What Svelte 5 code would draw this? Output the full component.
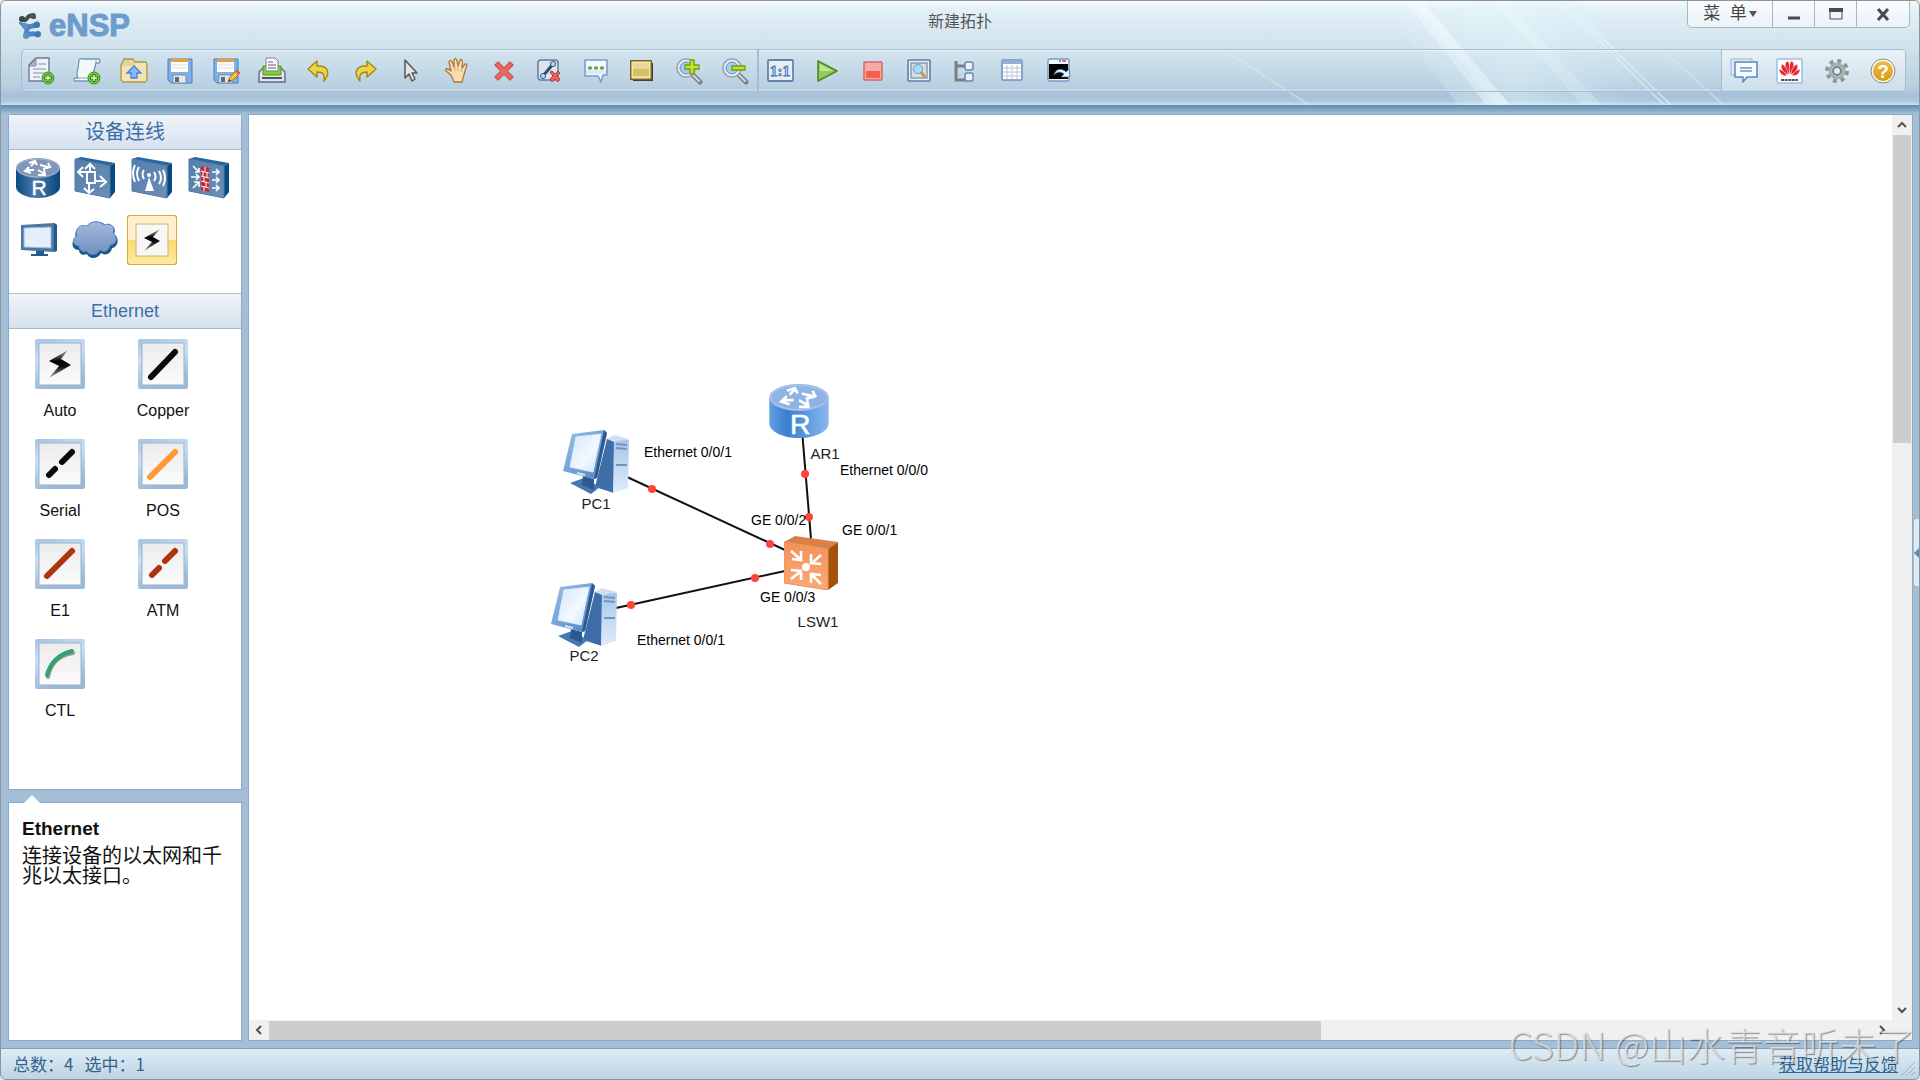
<script lang="ts">
  interface Device {
    id: string;
    kind: 'pc' | 'router' | 'switch';
    x: number;
    y: number;
    labelX: number;
    labelY: number;
  }

  // ── Toolbar ────────────────────────────────────────────────
  const editTools = [
    { icon: 'new', label: '新建拓扑' },
    { icon: 'paper', label: '新建试卷工程' },
    { icon: 'open', label: '打开' },
    { icon: 'save', label: '保存' },
    { icon: 'saveas', label: '另存为' },
    { icon: 'print', label: '打印' },
    { icon: 'undo', label: '撤销' },
    { icon: 'redo', label: '恢复' },
    { icon: 'cursor', label: '选择' },
    { icon: 'hand', label: '拖动' },
    { icon: 'delete', label: '删除' },
    { icon: 'unlink', label: '删除连线' },
    { icon: 'note', label: '文本' },
    { icon: 'palette', label: '调色板' },
    { icon: 'zoomin', label: '放大' },
    { icon: 'zoomout', label: '缩小' }
  ];
  const runTools = [
    { icon: 'reset', label: '重置大小' },
    { icon: 'start', label: '开启设备' },
    { icon: 'stop', label: '停止设备' },
    { icon: 'capture', label: '数据抓包' },
    { icon: 'tree', label: '显示所有接口' },
    { icon: 'grid', label: '显示网格' },
    { icon: 'console', label: '打开命令行' }
  ];
  const helpTools = [
    { icon: 'forum', label: '论坛' },
    { icon: 'huawei', label: '官网' },
    { icon: 'settings', label: '选项' },
    { icon: 'help', label: '帮助' }
  ];

  // ── Sidebar ────────────────────────────────────────────────
  const categories = ['router', 'switch', 'wlan', 'firewall', 'terminal', 'cloud', 'link'];
  const cables = ['Auto', 'Copper', 'Serial', 'POS', 'E1', 'ATM', 'CTL'];
  let category = $state('link');

  // ── Topology ───────────────────────────────────────────────
  const devices: Device[] = [
    { id: 'PC1', kind: 'pc', x: 314, y: 315, labelX: 347, labelY: 389 },
    { id: 'PC2', kind: 'pc', x: 302, y: 468, labelX: 335, labelY: 541 },
    { id: 'AR1', kind: 'router', x: 520, y: 269, labelX: 576, labelY: 339 },
    { id: 'LSW1', kind: 'switch', x: 535, y: 421, labelX: 569, labelY: 507 }
  ];
  const links = [
    { from: [553, 315], to: [562, 424], dots: [[556, 359], [560, 402]] },
    { from: [378, 362], to: [536, 435], dots: [[403, 374], [521, 429]] },
    { from: [367, 493], to: [536, 456], dots: [[382, 490], [506, 463]] }
  ];
  const ports = [
    { text: 'Ethernet 0/0/1', x: 395, y: 337 },
    { text: 'Ethernet 0/0/0', x: 591, y: 355 },
    { text: 'GE 0/0/2', x: 502, y: 405 },
    { text: 'GE 0/0/1', x: 593, y: 415 },
    { text: 'GE 0/0/3', x: 511, y: 482 },
    { text: 'Ethernet 0/0/1', x: 388, y: 525 }
  ];
</script>

{#snippet routerBody(dark: boolean)}
  <path d="M0 10V29C0 35 10 40 22 40S44 35 44 29V10Z" fill={dark ? 'url(#navySide)' : 'url(#blueSide)'} />
  <ellipse cx="22" cy="10" rx="22" ry="10" fill={dark ? '#8095b8' : '#8fb3e2'} />
  <ellipse cx="22" cy="10" rx="21" ry="9" fill="none" stroke={dark ? '#a3b4cf' : '#a9c6ec'} stroke-width="1" />
  <g fill="none" stroke="#fff" stroke-width="2">
    <path d="M15 8L19 4M13 5L19 3L21 7" />
    <path d="M24 7L32 9M32 5L34 9L27 11" />
    <path d="M18 12L10 12M13 9L9 13L15 15" />
    <path d="M22 12L29 16M22 17L29 17L28 12" />
  </g>
  <text x="23" y="37" text-anchor="middle" class="glyph" fill="#fff" stroke="#fff" stroke-width="0.4" font-size="21">R</text>
{/snippet}

{#snippet box()}
  <path d="M5 6L11 4L45 10L40 13Z" fill="#2c679c" />
  <path d="M40 13L45 10V39L40 45Z" fill="#064a82" />
  <path d="M5 6L40 13V45L5 38Z" fill="url(#boxFace)" stroke="#4f7aa7" />
{/snippet}

{#snippet categoryIcon(name: string)}
  <svg viewBox="0 0 50 50" width="50" height="50" aria-hidden="true">
    {#if name === 'router'}
      <g transform="translate(3 5)">{@render routerBody(true)}</g>
    {:else if name === 'switch'}
      {@render box()}
      <g fill="none" stroke="#fff" stroke-width="2">
        <path d="M9 19H25V30H17V19" />
        <path d="M13 14L8 19L13 24M20 19V12M15 16L20 11L25 16" />
        <path d="M19 30V39M14 35L19 40L24 36M25 28H35M30 23L36 29L30 34" />
      </g>
    {:else if name === 'wlan'}
      {@render box()}
      <path d="M22 24L18 38H27Z" fill="#fff" />
      <circle cx="22" cy="22" r="2" fill="#fff" />
      <g fill="none" stroke="#fff" stroke-width="2">
        <path d="M17 17Q14 21 17 26M12 14Q8 20 12 28M8 12Q4 20 8 29" />
        <path d="M27 19Q30 24 27 28M32 18Q36 25 32 31M36 17Q40 25 36 33" />
      </g>
    {:else if name === 'firewall'}
      {@render box()}
      <path d="M17 13L25 15V39L17 37Z" fill="#c7272f" />
      <path d="M17 18L25 20M17 23L25 25M17 28L25 30M17 33L25 35M21 14V18M19 19V23M23 20V25M20 24V29M22 29V34M20 34V38" stroke="#fff" fill="none" />
      <g fill="none" stroke="#fff" stroke-width="1.6">
        <path d="M9 13L15 19M15 15V19H11M7 24H15M12 21L15 24L12 27M9 35L15 29M10 29H15V34" />
        <path d="M28 19H35M32 16L35 19L32 22M28 27H35M32 24L35 27L32 30M28 35H35M32 32L35 35L32 38" />
      </g>
    {:else if name === 'terminal'}
      <path d="M8 10L41 8L44 10V35L41 37L8 35Z" fill="#4c76a6" />
      <path d="M41 8L44 10V36L41 37Z" fill="#285887" />
      <path d="M11 13L38 12V33L11 32Z" fill="#e5eef9" stroke="#9fb8d6" />
      <path d="M23 36H31V39H35V41H18V39H23Z" fill="#28598b" />
    {:else if name === 'cloud'}
      <path d="M9 35C2 35 0 27 6 23C3 15 11 10 17 12C21 5 32 6 35 10C42 7 47 14 44 19C50 23 48 32 42 33C41 39 35 41 31 38C27 46 18 43 17 39C13 41 9 39 9 35Z" fill="#1f548b" />
      <path d="M9 31C3 31 1 24 7 21C4 13 11 9 17 11C21 5 31 6 34 10C41 7 46 13 43 18C49 22 46 30 40 30C39 36 34 38 30 35C26 42 18 40 17 36C13 38 9 35 9 31Z" fill="url(#cloudFill)" stroke="#5486bb" />
    {:else}
      <rect x="9" y="9" width="32" height="32" fill="#f7f7f7" stroke="#d3b065" />
      <path d="M33 14L17 23L25 27L17 36L33 26L26 22Z" fill="url(#boltFill)" />
    {/if}
  </svg>
{/snippet}

{#snippet cableIcon(name: string)}
  <svg viewBox="0 0 50 50" width="50" height="50" aria-hidden="true">
    <rect width="50" height="50" rx="2" fill="url(#tileFrame)" />
    <rect x="4" y="4" width="42" height="42" fill="url(#tileFace)" stroke="#9db1c8" />
    <g fill="none" stroke-width="6" stroke-linecap="round">
      {#if name === 'Auto'}
        <path d="M33 11L14 22L24 27L14 39L36 26L26 20Z" fill="url(#boltFill)" />
      {:else if name === 'Copper'}
        <path d="M13 38L37 13" stroke="#0a0a0a" />
      {:else if name === 'Serial'}
        <path d="M14 36L20 30M27 23L37 13" stroke="#0a0a0a" />
      {:else if name === 'POS'}
        <path d="M12 38L37 13" stroke="#ff9a33" />
      {:else if name === 'E1'}
        <path d="M12 37L37 12" stroke="#ae3310" />
      {:else if name === 'ATM'}
        <path d="M14 36L21 29M27 22L37 12" stroke="#ae3310" />
      {:else}
        <path d="M13 38Q17 17 38 14" stroke="#8e9a92" stroke-width="4" />
        <path d="M12 36Q17 17 37 12" stroke="#34a36b" stroke-width="4" />
      {/if}
    </g>
  </svg>
{/snippet}

{#snippet plusBadge()}
  <circle cx="21" cy="21" r="6" fill="#72c43a" stroke="#3c9420" />
  <path d="M21 17V25M17 21H25" stroke="#2b7d14" stroke-width="3" />
  <path d="M21 18V24M18 21H24" stroke="#e9ffd2" stroke-width="1.4" />
{/snippet}

{#snippet lens()}
  <path d="M16 16L25 25" stroke="#7d7f83" stroke-width="5" stroke-linecap="round" />
  <path d="M16 16L24 24" stroke="#d3d5d8" stroke-width="2" stroke-linecap="round" />
  <circle cx="11" cy="11" r="9" fill="#b9d6f3" stroke="#a5a9ae" stroke-width="2" />
  <circle cx="11" cy="11" r="7" fill="#a6cbf1" stroke="#eef3f8" stroke-width="2" />
  <circle cx="11" cy="11" r="6" fill="none" stroke="#5a8fd0" />
{/snippet}

{#snippet floppy()}
  <path d="M2 2H26V26H5L2 23Z" fill="#7fb0e3" stroke="#4a7fbd" />
  <rect x="5" y="2" width="17" height="13" fill="#fff" />
  <rect x="5" y="2" width="17" height="3" fill="#f39a35" />
  <path d="M6 8H21M6 11H21" stroke="#d5dbe2" />
  <rect x="7" y="18" width="13" height="8" fill="#e5e8ea" stroke="#7391b5" />
  <rect x="9" y="20" width="4" height="5" fill="#5d6a78" />
{/snippet}

{#snippet toolIcon(name: string)}
  <svg viewBox="0 0 28 28" width="28" height="28" fill="none" aria-hidden="true">
    {#if name === 'new'}
      <path d="M2 8L9 1H22V24H2Z" fill="#eff3f6" stroke="#667b9f" stroke-width="1.4" />
      <path d="M2 9L9 2V9Z" fill="#aab6c3" stroke="#7e8da5" />
      <path d="M11 7H19M6 12H19M6 16H17M6 20H13" stroke="#a2b2c5" stroke-width="1.4" />
      {@render plusBadge()}
    {:else if name === 'paper'}
      <path d="M6 3Q7 1 10 2H26Q28 4 26 6H23L19 21Q18 24 15 24H2Q0 22 2 21H5Q3 17 5 12Z" fill="#f3f9fb" stroke="#6e99b3" stroke-width="1.3" />
      <path d="M5 21H17M23 3V6" stroke="#7ea8bf" />
      {@render plusBadge()}
    {:else if name === 'open'}
      <path d="M2 6L4 2H13L15 5H26L27 8V23L25 25H3L1 23V8Z" fill="#e4d49a" stroke="#ae994e" stroke-width="1.3" />
      <path d="M2 9H14L17 6H26V23L25 24H3L2 23Z" fill="#f1e5b8" />
      <path d="M14 9L21 16H17V21H11V16H7Z" fill="#86b9ff" stroke="#4a7fd8" stroke-width="1.3" />
    {:else if name === 'save'}
      {@render floppy()}
    {:else if name === 'saveas'}
      {@render floppy()}
      <path d="M16 25L18 20L25 13L28 16L21 23Z" fill="#f7c23b" stroke="#a77720" />
      <path d="M24 14L27 17" stroke="#e45b4e" stroke-width="2" />
      <path d="M16 25L17 22L19 24Z" fill="#4a3c28" />
    {:else if name === 'print'}
      <path d="M5 11H23L27 15V25H1V15Z" fill="#dfe3eb" stroke="#5c6a88" stroke-width="1.4" />
      <path d="M5 9H23V18H5Z" fill="#86cf2c" stroke="#55981a" />
      <path d="M8 1H17L20 4V14H8Z" fill="#fafafa" stroke="#7c838c" />
      <path d="M10 5H15M10 8H18M10 11H18" stroke="#8d949c" stroke-width="1.4" />
      <path d="M4 21H24" stroke="#4f5665" stroke-width="2" />
    {:else if name === 'undo' || name === 'redo'}
      <path
        transform={name === 'redo' ? 'translate(28 0) scale(-1 1)' : undefined}
        d="M3 12L12 4V9C23 8 26 16 19 24C20 17 18 15 12 15V20Z"
        fill="#edd34c"
        stroke="#a58b12"
        stroke-width="1.5"
        stroke-linejoin="round"
      />
    {:else if name === 'cursor'}
      <path d="M8 3V21L12 17L15 24L18 22L15 16H20Z" fill="#e6e6e6" stroke="#55585d" stroke-width="1.5" stroke-linejoin="round" />
    {:else if name === 'hand'}
      <path d="M11 25L8 18L3 14C2 11 5 11 8 14L6 5C7 2 9 3 11 10L11 3C12 0 14 1 15 9L17 3C19 1 20 3 19 11L22 7C25 6 24 9 22 14L19 25Z" fill="#f8ddb2" stroke="#aa793d" stroke-width="1.3" stroke-linejoin="round" />
      <path d="M12 9V14M15 9V14M19 11L18 15" stroke="#dba968" />
    {:else if name === 'delete'}
      <path d="M5 8L8 5L14 11L20 5L23 8L17 14L23 20L20 23L14 17L8 23L5 20L11 14Z" fill="#ef6b60" stroke="#c5595a" stroke-width="1.4" stroke-linejoin="round" />
    {:else if name === 'unlink'}
      <rect x="2" y="3" width="20" height="20" rx="3" fill="#dde4eb" stroke="#5d7ca6" stroke-width="1.5" />
      <path d="M7 19L17 7" stroke="#30496c" stroke-width="3" />
      <circle cx="7" cy="19" r="2.5" fill="#bddcff" stroke="#31507c" />
      <circle cx="17" cy="7" r="2.5" fill="#bddcff" stroke="#31507c" />
      <path d="M14 15L16 14L19 17L22 14L24 16L21 19L24 22L22 25L19 22L16 25L14 22L17 19Z" fill="#ef6259" stroke="#a73c39" />
    {:else if name === 'note'}
      <path d="M3 3H25V18H21L19 25L16 19H3Z" fill="#f2f8ff" stroke="#7a9cca" stroke-width="1.6" stroke-linejoin="round" />
      <path d="M4 13H24V17H4Z" fill="#dceaf9" />
      <g fill="#64ab2c">
        <ellipse cx="8" cy="11" rx="2.2" ry="1.8" />
        <ellipse cx="14" cy="11" rx="2.2" ry="1.8" />
        <ellipse cx="20" cy="11" rx="2.2" ry="1.8" />
      </g>
    {:else if name === 'palette'}
      <rect x="5" y="6" width="20" height="18" fill="#4c3f1e" />
      <rect x="3" y="4" width="20" height="18" fill="#e7d892" stroke="#75632c" stroke-width="2" />
      <rect x="5" y="12" width="16" height="7" fill="#d4c069" />
      <rect x="4" y="5" width="18" height="16" stroke="#fff4c4" />
    {:else if name === 'zoomin'}
      {@render lens()}
      <path d="M15 3H19V8H24V12H19V17H15V12H10V8H15Z" fill="#c5e32c" stroke="#6f9f14" stroke-width="1.3" />
    {:else if name === 'zoomout'}
      {@render lens()}
      <path d="M11 9H24V13H11Z" fill="#c5e32c" stroke="#6f9f14" stroke-width="1.3" />
    {:else if name === 'reset'}
      <rect x="2" y="3" width="25" height="21" rx="1" fill="#e9edf2" stroke="#6483ad" stroke-width="1.8" />
      <text x="14" y="19" text-anchor="middle" class="serif" font-size="15" font-weight="700" fill="#d5e8fb" stroke="#3f78b9">1:1</text>
    {:else if name === 'start'}
      <path d="M6 4L25 14L6 24Z" fill="#8fcf58" stroke="#4b8a1e" stroke-width="1.6" stroke-linejoin="round" />
      <path d="M8 7L21 14H8Z" fill="#bfe59b" />
    {:else if name === 'stop'}
      <rect x="5" y="5" width="18" height="18" rx="1" fill="#f7aaa3" stroke="#d26860" stroke-width="1.5" />
      <rect x="7" y="14" width="14" height="7" fill="#f4604f" />
    {:else if name === 'capture'}
      <rect x="3" y="3" width="22" height="21" rx="1" fill="#e9f0f7" stroke="#5f7da5" stroke-width="1.6" />
      <rect x="6" y="6" width="16" height="15" fill="#d3dce5" stroke="#8196b0" stroke-width="1.4" />
      <path d="M16 15L20 20" stroke="#c69c35" stroke-width="3" />
      <circle cx="13" cy="12" r="4.5" fill="#a5dcfa" stroke="#719fc5" />
    {:else if name === 'tree'}
      <path d="M5 4V23H15M5 9H15" stroke="#777d84" stroke-width="3" />
      <rect x="14" y="5" width="8" height="8" rx="2" fill="#e9f0f7" stroke="#6887aa" stroke-width="1.5" />
      <rect x="14" y="16" width="8" height="8" rx="2" fill="#e9f0f7" stroke="#6887aa" stroke-width="1.5" />
    {:else if name === 'grid'}
      <rect x="4" y="3" width="20" height="20" rx="1" fill="#fff" stroke="#7190bb" stroke-width="1.6" />
      <rect x="5" y="4" width="18" height="3" fill="#8fb0d8" />
      <path d="M5 11H23M5 15H23M5 19H23M9 8V22M14 8V22M19 8V22" stroke="#b5c6da" />
    {:else if name === 'console'}
      <rect x="4" y="2" width="21" height="22" rx="2" fill="#f6faff" stroke="#7a9bc2" stroke-width="1.5" />
      <rect x="5" y="7" width="19" height="15" fill="#050505" />
      <path d="M15 4H17M18 4H20" stroke="#6b7683" stroke-width="1.5" />
      <path d="M20 4H22" stroke="#e33" stroke-width="1.5" />
      <path d="M10 18C12 11 18 11 22 15L25 12L26 20H17L20 17C16 14 13 15 10 18Z" fill="#e9f5ff" stroke="#3b6b9a" stroke-width="0.8" />
    {:else if name === 'forum'}
      <path d="M1 2H22V18H1Z" fill="#dfe9f6" stroke="#9ab6dc" />
      <path d="M5 5H27V20H17L13 25V20H5Z" fill="#f7fbff" stroke="#5c86bd" stroke-width="1.5" stroke-linejoin="round" />
      <path d="M10 11H22M10 14H22" stroke="#6c96cc" stroke-width="1.4" />
    {:else if name === 'huawei'}
      <rect x="1" y="2" width="25" height="24" rx="1" fill="#fff" stroke="#9ebfe6" stroke-width="1.6" />
      <g fill="#e6252e" stroke="#fff" stroke-width="0.5">
        <path d="M13 18C8 11 8 5 12 4C14 7 14 13 13 18Z" />
        <path d="M14 18C13 13 13 7 15 4C19 5 19 11 14 18Z" />
        <path d="M12 18C6 15 4 10 6 7C10 9 12 14 12 18Z" />
        <path d="M15 18C15 14 17 9 21 7C23 10 21 15 15 18Z" />
        <path d="M11 19C6 19 3 16 3 12C8 14 10 16 11 19Z" />
        <path d="M16 19C17 16 19 14 24 12C24 16 21 19 16 19Z" />
      </g>
      <path d="M5 23H22" stroke="#555" stroke-width="2" stroke-dasharray="3 0.6" />
    {:else if name === 'settings'}
      <circle cx="14" cy="14" r="10" stroke="#879895" stroke-width="4" stroke-dasharray="4 3.85" />
      <circle cx="14" cy="14" r="7" fill="#c7d2d2" stroke="#a2b1af" stroke-width="3" />
      <circle cx="14" cy="14" r="4" fill="#dcebf1" stroke="#6e8792" stroke-width="2" />
    {:else if name === 'help'}
      <circle cx="14" cy="14" r="12" fill="#faf7ee" stroke="#8e8878" />
      <circle cx="14" cy="14" r="10" fill="url(#helpFill)" />
      <text x="14" y="21" text-anchor="middle" class="glyph" font-size="19" font-weight="700" fill="#fff">?</text>
    {/if}
  </svg>
{/snippet}

{#snippet deviceIcon(kind: Device['kind'])}
  {#if kind === 'pc'}
    <svg viewBox="0 0 66 64" width="66" height="64" aria-hidden="true">
      <path d="M44 9L51 7V63L32 57Z" fill="#3d6ea8" />
      <path d="M51 7L66 10L65 58L50 63Z" fill="url(#towerFace)" />
      <path d="M44 9L51 5L66 9L51 12Z" fill="#cfe0f5" />
      <path d="M53 14L64 15M53 18L64 19M53 35H64" stroke="#6d95c8" stroke-width="2" />
      <path d="M7 53L21 48L37 57L28 64Z" fill="#4577b3" />
      <path d="M20 46L31 49V60L19 55Z" fill="#2c5990" />
      <path d="M9 4L41 0L44 3L34 48L31 49L0 41Z" fill="url(#monitorFrame)" />
      <path d="M41 0L44 3L34 48L31 49Z" fill="#2b5a93" />
      <path d="M13 7L38 4L30 42L7 37Z" fill="url(#screenFill)" stroke="#dceaff" />
      <path d="M14 43L22 45" stroke="#d4e5fb" stroke-width="2" />
    </svg>
  {:else if kind === 'router'}
    <svg viewBox="0 0 44 40" width="60" height="54" aria-hidden="true">{@render routerBody(false)}</svg>
  {:else}
    <svg viewBox="0 0 54 54" width="54" height="54" aria-hidden="true">
      <path d="M0 6L11 0L54 6L44 13Z" fill="#d98149" />
      <path d="M44 13L54 6V47L44 54Z" fill="#a5500b" />
      <path d="M0 6L44 13V54L0 47Z" fill="url(#orangeFace)" stroke="#e9935c" />
      <ellipse cx="22" cy="31" rx="4" ry="4" fill="#fff" />
      <g fill="none" stroke="#fff" stroke-width="2.6">
        <path d="M7 15L16 23M17 15V24L8 23" />
        <path d="M37 19L29 26M27 18V27L37 28" />
        <path d="M7 43L16 36M7 34L17 35V44" />
        <path d="M37 48L28 39M27 47V38L37 39" />
      </g>
    </svg>
  {/if}
{/snippet}

<svg class="defs" width="0" height="0" aria-hidden="true">
  <defs>
    <linearGradient id="navySide">
      <stop offset="0" stop-color="#0c4b82" /><stop offset="0.45" stop-color="#4d7dab" /><stop offset="1" stop-color="#06467d" />
    </linearGradient>
    <linearGradient id="blueSide">
      <stop offset="0" stop-color="#63a0e3" /><stop offset="0.3" stop-color="#3a7fd0" /><stop offset="0.65" stop-color="#5c9de0" /><stop offset="1" stop-color="#8cb8ec" />
    </linearGradient>
    <linearGradient id="boxFace" x1="0" y1="0" x2="1" y2="1">
      <stop offset="0" stop-color="#537fae" /><stop offset="1" stop-color="#6d8db5" />
    </linearGradient>
    <linearGradient id="cloudFill" x1="0" y1="0" x2="0" y2="1">
      <stop offset="0" stop-color="#a5b8dc" /><stop offset="1" stop-color="#6e92c0" />
    </linearGradient>
    <linearGradient id="tileFrame" x1="0" y1="0" x2="0.3" y2="1">
      <stop offset="0" stop-color="#a5c2e4" /><stop offset="0.4" stop-color="#c9def6" /><stop offset="1" stop-color="#9ab8d8" />
    </linearGradient>
    <linearGradient id="tileFace" x1="0" y1="0" x2="0" y2="1">
      <stop offset="0" stop-color="#ececec" /><stop offset="1" stop-color="#fbfbfb" />
    </linearGradient>
    <linearGradient id="boltFill" x1="0" y1="0" x2="0" y2="1">
      <stop offset="0" stop-color="#b8b8a8" /><stop offset="0.4" stop-color="#000" /><stop offset="0.6" stop-color="#111" /><stop offset="1" stop-color="#aaa" />
    </linearGradient>
    <linearGradient id="orangeFace" x1="0" y1="0" x2="0" y2="1">
      <stop offset="0" stop-color="#f2935a" /><stop offset="1" stop-color="#fba877" />
    </linearGradient>
    <linearGradient id="towerFace" x1="0" y1="0" x2="0" y2="1">
      <stop offset="0" stop-color="#a5c4ea" /><stop offset="1" stop-color="#dfecfb" />
    </linearGradient>
    <linearGradient id="monitorFrame" x1="0" y1="0" x2="1" y2="1">
      <stop offset="0" stop-color="#9cc1ec" /><stop offset="1" stop-color="#4f82bf" />
    </linearGradient>
    <linearGradient id="screenFill" x1="0" y1="0" x2="1" y2="1">
      <stop offset="0" stop-color="#d7e8fc" /><stop offset="0.6" stop-color="#f2f8ff" /><stop offset="1" stop-color="#cfe2f9" />
    </linearGradient>
    <linearGradient id="helpFill" x1="0" y1="0" x2="0" y2="1">
      <stop offset="0" stop-color="#e8bc4c" /><stop offset="1" stop-color="#dc9a14" />
    </linearGradient>
    <linearGradient id="glow">
      <stop offset="0" stop-color="#e6f8fc" stop-opacity="0" /><stop offset="0.5" stop-color="#e2f7fb" stop-opacity="0.5" /><stop offset="1" stop-color="#d5f2f8" stop-opacity="0" />
    </linearGradient>
  </defs>
</svg>

<div class="window">
  <header>
    <svg class="streaks" width="690" height="105" aria-hidden="true">
      <path d="M150 0H350L430 105H230Z" fill="url(#glow)" />
      <path d="M176 0H194L282 105H258Z" fill="#f2fbfe" fill-opacity="0.45" />
      <path d="M182 0H192L282 105H268Z" fill="#fff" fill-opacity="0.2" />
      <path d="M264 0H276L374 105H354Z" fill="#f4fbfd" fill-opacity="0.25" />
      <path d="M330 0L436 105M335 0L443 105" stroke="#e3fafc" stroke-opacity="0.5" stroke-width="2" />
      <path d="M0 52L82 105M430 46L496 105" stroke="#dcf5f9" stroke-opacity="0.4" stroke-width="2" />
    </svg>

    <div class="titlebar">
      <div class="brand">
        <svg viewBox="0 0 26 28" width="26" height="28" aria-hidden="true">
          <path d="M3 7Q6 10 9 5Q12 2 15 5" fill="none" stroke="#45484c" stroke-width="4" stroke-linecap="round" />
          <circle cx="3" cy="7" r="3" fill="#3f4246" />
          <circle cx="14" cy="4" r="3" fill="#4f5256" />
          <path d="M18 12Q13 16 6 14Q10 18 6 24Q13 20 19 23" fill="none" stroke="#4d84bd" stroke-width="5" stroke-linecap="round" />
          <circle cx="6" cy="14" r="3" fill="#5a92c9" />
          <circle cx="18" cy="13" r="3" fill="#3d76b4" />
          <circle cx="7" cy="24" r="3" fill="#5a92c9" />
          <circle cx="19" cy="22" r="3" fill="#3d76b4" />
        </svg>
        <span>eNSP</span>
      </div>
      <h1>新建拓扑</h1>
      <div class="controls">
        <button class="menu">菜&nbsp; 单<svg width="8" height="6" aria-hidden="true"><path d="M0 0H8L4 6Z" fill="#555" /></svg></button>
        <button aria-label="最小化"><svg width="14" height="14"><path d="M1 11H13" stroke="#454b55" stroke-width="3" /></svg></button>
        <button aria-label="最大化"><svg width="14" height="14"><path d="M1 3V12H13V3" fill="none" stroke="#454b55" /><path d="M0 3H14" stroke="#454b55" stroke-width="4" /></svg></button>
        <button class="close" aria-label="关闭"><svg width="14" height="14"><path d="M2 2L12 13M12 2L2 13" stroke="#454b55" stroke-width="3" /></svg></button>
      </div>
    </div>

    <div class="toolbar">
      <div class="group edit">
        {#each editTools as tool (tool.icon)}
          <button aria-label={tool.label}>{@render toolIcon(tool.icon)}</button>
        {/each}
      </div>
      <div class="group run">
        {#each runTools as tool (tool.icon)}
          <button aria-label={tool.label}>{@render toolIcon(tool.icon)}</button>
        {/each}
      </div>
      <div class="group support">
        {#each helpTools as tool (tool.icon)}
          <button aria-label={tool.label}>{@render toolIcon(tool.icon)}</button>
        {/each}
      </div>
    </div>
  </header>

  <main>
    <aside>
      <section class="panel devices">
        <h2>设备连线</h2>
        <div class="categories">
          {#each categories as name (name)}
            <button class:selected={category === name} aria-label={name} onclick={() => (category = name)}>
              {@render categoryIcon(name)}
            </button>
          {/each}
        </div>
        <h2>Ethernet</h2>
        <div class="cables">
          {#each cables as name (name)}
            <button>
              {@render cableIcon(name)}
              <span>{name}</span>
            </button>
          {/each}
        </div>
      </section>

      <section class="panel hint">
        <h3>Ethernet</h3>
        <p>连接设备的以太网和千兆以太接口。</p>
      </section>
    </aside>

    <div class="workspace">
      <div class="canvas">
        <svg class="wires" aria-hidden="true">
          {#each links as link}
            <line x1={link.from[0]} y1={link.from[1]} x2={link.to[0]} y2={link.to[1]} />
            {#each link.dots as [cx, cy]}
              <circle {cx} {cy} r="4" />
            {/each}
          {/each}
        </svg>
        {#each devices as device (device.id)}
          <div class="node" style="left: {device.x}px; top: {device.y}px">{@render deviceIcon(device.kind)}</div>
          <span class="name" style="left: {device.labelX}px; top: {device.labelY}px">{device.id}</span>
        {/each}
        {#each ports as port}
          <span class="port" style="left: {port.x}px; top: {port.y}px">{port.text}</span>
        {/each}
      </div>
      <div class="scroll vertical">
        <svg width="12" height="20"><path d="M2 12L6 8L10 12" /></svg>
        <div class="thumb"></div>
        <svg width="12" height="20"><path d="M2 8L6 12L10 8" /></svg>
      </div>
      <div class="scroll horizontal">
        <svg width="20" height="12"><path d="M12 2L8 6L12 10" /></svg>
        <div class="thumb"></div>
        <svg width="20" height="12"><path d="M8 2L12 6L8 10" /></svg>
      </div>
      <div class="corner"></div>
    </div>

    <button class="drawer" aria-label="展开">
      <svg width="5" height="10"><path d="M5 0V10L0 5Z" fill="#5d8bab" /></svg>
    </button>
  </main>

  <footer>
    <span>总数：4</span>
    <span>选中：1</span>
    <a href="#feedback">获取帮助与反馈</a>
    <svg class="grip" width="14" height="14" aria-hidden="true"><path d="M0 14L14 0M5 14L14 5M10 14L14 10" stroke="#9fb4c4" /></svg>
  </footer>

  <div class="watermark">CSDN @山水青音听未了</div>
</div>

<style>
  :global(body) {
    margin: 0;
    background: #f3e6d3;
  }

  .window {
    position: relative;
    display: flex;
    flex-direction: column;
    box-sizing: border-box;
    min-height: 100vh;
    border: 1px solid #8f9499;
    border-radius: 6px;
    overflow: hidden;
    background: #a3bfd7;
    font-family: 'Liberation Sans', 'Noto Sans CJK SC', sans-serif;
    color: #111;
  }

  .defs {
    position: absolute;
  }

  .glyph {
    font-family: 'Liberation Sans', sans-serif;
  }

  .serif {
    font-family: 'Liberation Serif', serif;
  }

  button {
    margin: 0;
    padding: 0;
    border: none;
    background: none;
    font: inherit;
    color: inherit;
    cursor: pointer;
  }

  svg {
    display: block;
    flex: none;
  }

  h1,
  h2,
  h3,
  p {
    margin: 0;
    font-weight: 400;
  }

  /* ── Header ── */
  header {
    position: relative;
    display: flex;
    flex-direction: column;
    height: 104px;
    background: linear-gradient(#f5fafd 0, #e3f1f8 8px, #d0e2ec 46px, #b5cde0 88px, #a6c1d9 93px, #abc7de 100px, #d2e1ea 104px);
  }

  .streaks {
    position: absolute;
    top: 0;
    right: 0;
  }

  .titlebar {
    position: relative;
    display: grid;
    grid-template-columns: 1fr auto 1fr;
    height: 48px;
  }

  .brand {
    display: flex;
    align-items: center;
    gap: 4px;
    padding: 2px 0 0 18px;
    font-size: 31px;
    font-weight: 700;
    line-height: 28px;
    color: #6d9bcb;
  }

  .brand span {
    -webkit-text-stroke: 1px #6d9bcb;
  }

  h1 {
    padding-top: 9px;
    font-size: 16px;
    line-height: 24px;
    color: #555;
  }

  .controls {
    display: flex;
    justify-self: end;
    height: 26px;
    margin-right: 9px;
    border: 1px solid #b0b5ba;
    border-top: none;
    border-radius: 0 0 5px 5px;
    background: linear-gradient(#f8fcfe, #e9f3f8);
  }

  .controls button {
    display: flex;
    align-items: center;
    justify-content: center;
    box-sizing: border-box;
    width: 42px;
    border-left: 1px solid #b0b5ba;
  }

  .controls .menu {
    gap: 2px;
    width: 84px;
    border-left: none;
    font-size: 17px;
    line-height: 24px;
    color: #444;
  }

  .controls .close {
    width: 53px;
  }

  .toolbar {
    position: relative;
    display: flex;
    height: 41px;
    margin: 0 13px 0 20px;
    border: 1px solid #a5bdcc;
    border-radius: 5px;
    background: linear-gradient(#ffffff99, #d9e9f255 2px, #bcd3e322 39px, #e3eef4aa);
  }

  .group {
    display: flex;
    align-items: center;
    justify-content: space-between;
    box-sizing: border-box;
  }

  .group button {
    width: 28px;
    height: 28px;
  }

  .edit {
    width: 737px;
    padding: 0 8px 0 5px;
    border-right: 2px solid #a9bccb;
  }

  .run {
    width: 313px;
    padding-left: 7px;
  }

  .support {
    width: 184px;
    margin-left: auto;
    padding: 0 8px;
    border-left: 1px solid #a5bdcc;
    border-radius: 0 4px 4px 0;
    background: linear-gradient(#e9f3f7, #cbdeea);
  }

  /* ── Main area ── */
  main {
    position: relative;
    display: flex;
    flex: 1;
    gap: 6px;
    padding: 9px 6px 7px 7px;
    background: linear-gradient(#5e8cad, #a3bfd7 9px);
  }

  aside {
    display: flex;
    flex-direction: column;
    gap: 12px;
    width: 234px;
  }

  .panel {
    box-sizing: border-box;
    border: 1px solid #8fa9c4;
    background: #fff;
  }

  .devices {
    height: 676px;
    border-radius: 3px 3px 0 0;
  }

  h2 {
    box-sizing: border-box;
    height: 35px;
    border-bottom: 1px solid #a3b9d1;
    background: linear-gradient(#f0f4fa, #d6e1ee);
    font-size: 18px;
    line-height: 34px;
    text-align: center;
    color: #3b6fa5;
  }

  h2:first-child {
    font-size: 20px;
  }

  .categories {
    display: grid;
    grid-template-columns: repeat(4, 1fr);
    justify-items: center;
    align-content: start;
    row-gap: 12px;
    box-sizing: border-box;
    height: 144px;
    padding: 3px 3px 0 0;
    border-bottom: 1px solid #b4c2d0;
  }

  .categories button {
    width: 50px;
    height: 50px;
  }

  .categories .selected {
    border-radius: 3px;
    background: linear-gradient(#fdf0cb 50%, #fbdb71 50%, #fdeaa5);
    box-shadow: inset 0 0 0 1px #d9a93c;
  }

  .cables {
    display: grid;
    grid-template-columns: 102px 104px;
    row-gap: 10px;
    padding-top: 10px;
  }

  .cables button {
    display: flex;
    flex-direction: column;
    align-items: center;
    gap: 12px;
    height: 90px;
    font-size: 16px;
    line-height: 20px;
  }

  .hint {
    position: relative;
    flex: 1;
    padding: 16px 13px;
  }

  .hint::before {
    content: '';
    position: absolute;
    top: -8px;
    left: 14px;
    border: 9px solid transparent;
    border-top: none;
    border-bottom-color: #fff;
  }

  h3 {
    font-size: 19px;
    font-weight: 700;
    line-height: 20px;
  }

  .hint p {
    margin-top: 7px;
    font-size: 20px;
    line-height: 20px;
  }

  /* ── Workspace ── */
  .workspace {
    display: grid;
    flex: 1;
    grid-template-columns: 1fr 20px;
    grid-template-rows: 1fr 20px;
    border: 1px solid #8fa9c4;
    background: #fff;
  }

  .canvas {
    position: relative;
    overflow: hidden;
  }

  .wires {
    position: absolute;
    width: 100%;
    height: 100%;
  }

  .wires line {
    stroke: #111;
    stroke-width: 2;
  }

  .wires circle {
    fill: #ff453a;
  }

  .node,
  .name,
  .port {
    position: absolute;
  }

  .name {
    transform: translate(-50%, -50%);
    font-size: 15px;
    line-height: 18px;
    color: #222;
  }

  .port {
    transform: translateY(-50%);
    font-size: 14px;
    line-height: 16px;
    white-space: nowrap;
    color: #000;
  }

  .scroll {
    display: flex;
    align-items: center;
    background: #f0f0f0;
  }

  .scroll path {
    fill: none;
    stroke: #505050;
    stroke-width: 2;
  }

  .thumb {
    background: #cdcdcd;
  }

  .vertical {
    flex-direction: column;
  }

  .vertical .thumb {
    width: 18px;
    height: 34%;
    margin-bottom: auto;
  }

  .horizontal .thumb {
    width: 64%;
    height: 19px;
    margin-right: auto;
  }

  .corner {
    background: #f0f0f0;
  }

  .drawer {
    position: absolute;
    top: 414px;
    right: 0;
    display: flex;
    align-items: center;
    justify-content: flex-end;
    width: 5px;
    height: 67px;
    border-radius: 3px 0 0 3px;
    background: #dcebf5;
  }

  /* ── Status bar ── */
  footer {
    display: flex;
    align-items: center;
    gap: 11px;
    height: 30px;
    padding: 0 4px 0 12px;
    border-top: 1px solid #8a9fb3;
    background: linear-gradient(#e0ecf5, #bdd4e4);
    font-family: 'Noto Sans CJK SC', sans-serif;
    font-size: 17px;
    line-height: 28px;
    color: #33638d;
  }

  footer a {
    margin: 0 -8px 0 auto;
    color: #2d6590;
  }

  .grip {
    align-self: flex-end;
    margin-bottom: 3px;
  }

  .watermark {
    position: absolute;
    right: 4px;
    bottom: 8px;
    font-family: 'Noto Sans CJK SC', sans-serif;
    font-size: 38px;
    font-weight: 300;
    line-height: 54px;
    color: #e9edf0b8;
    text-shadow: 1px 1px 1px #00000066;
    pointer-events: none;
  }
</style>
